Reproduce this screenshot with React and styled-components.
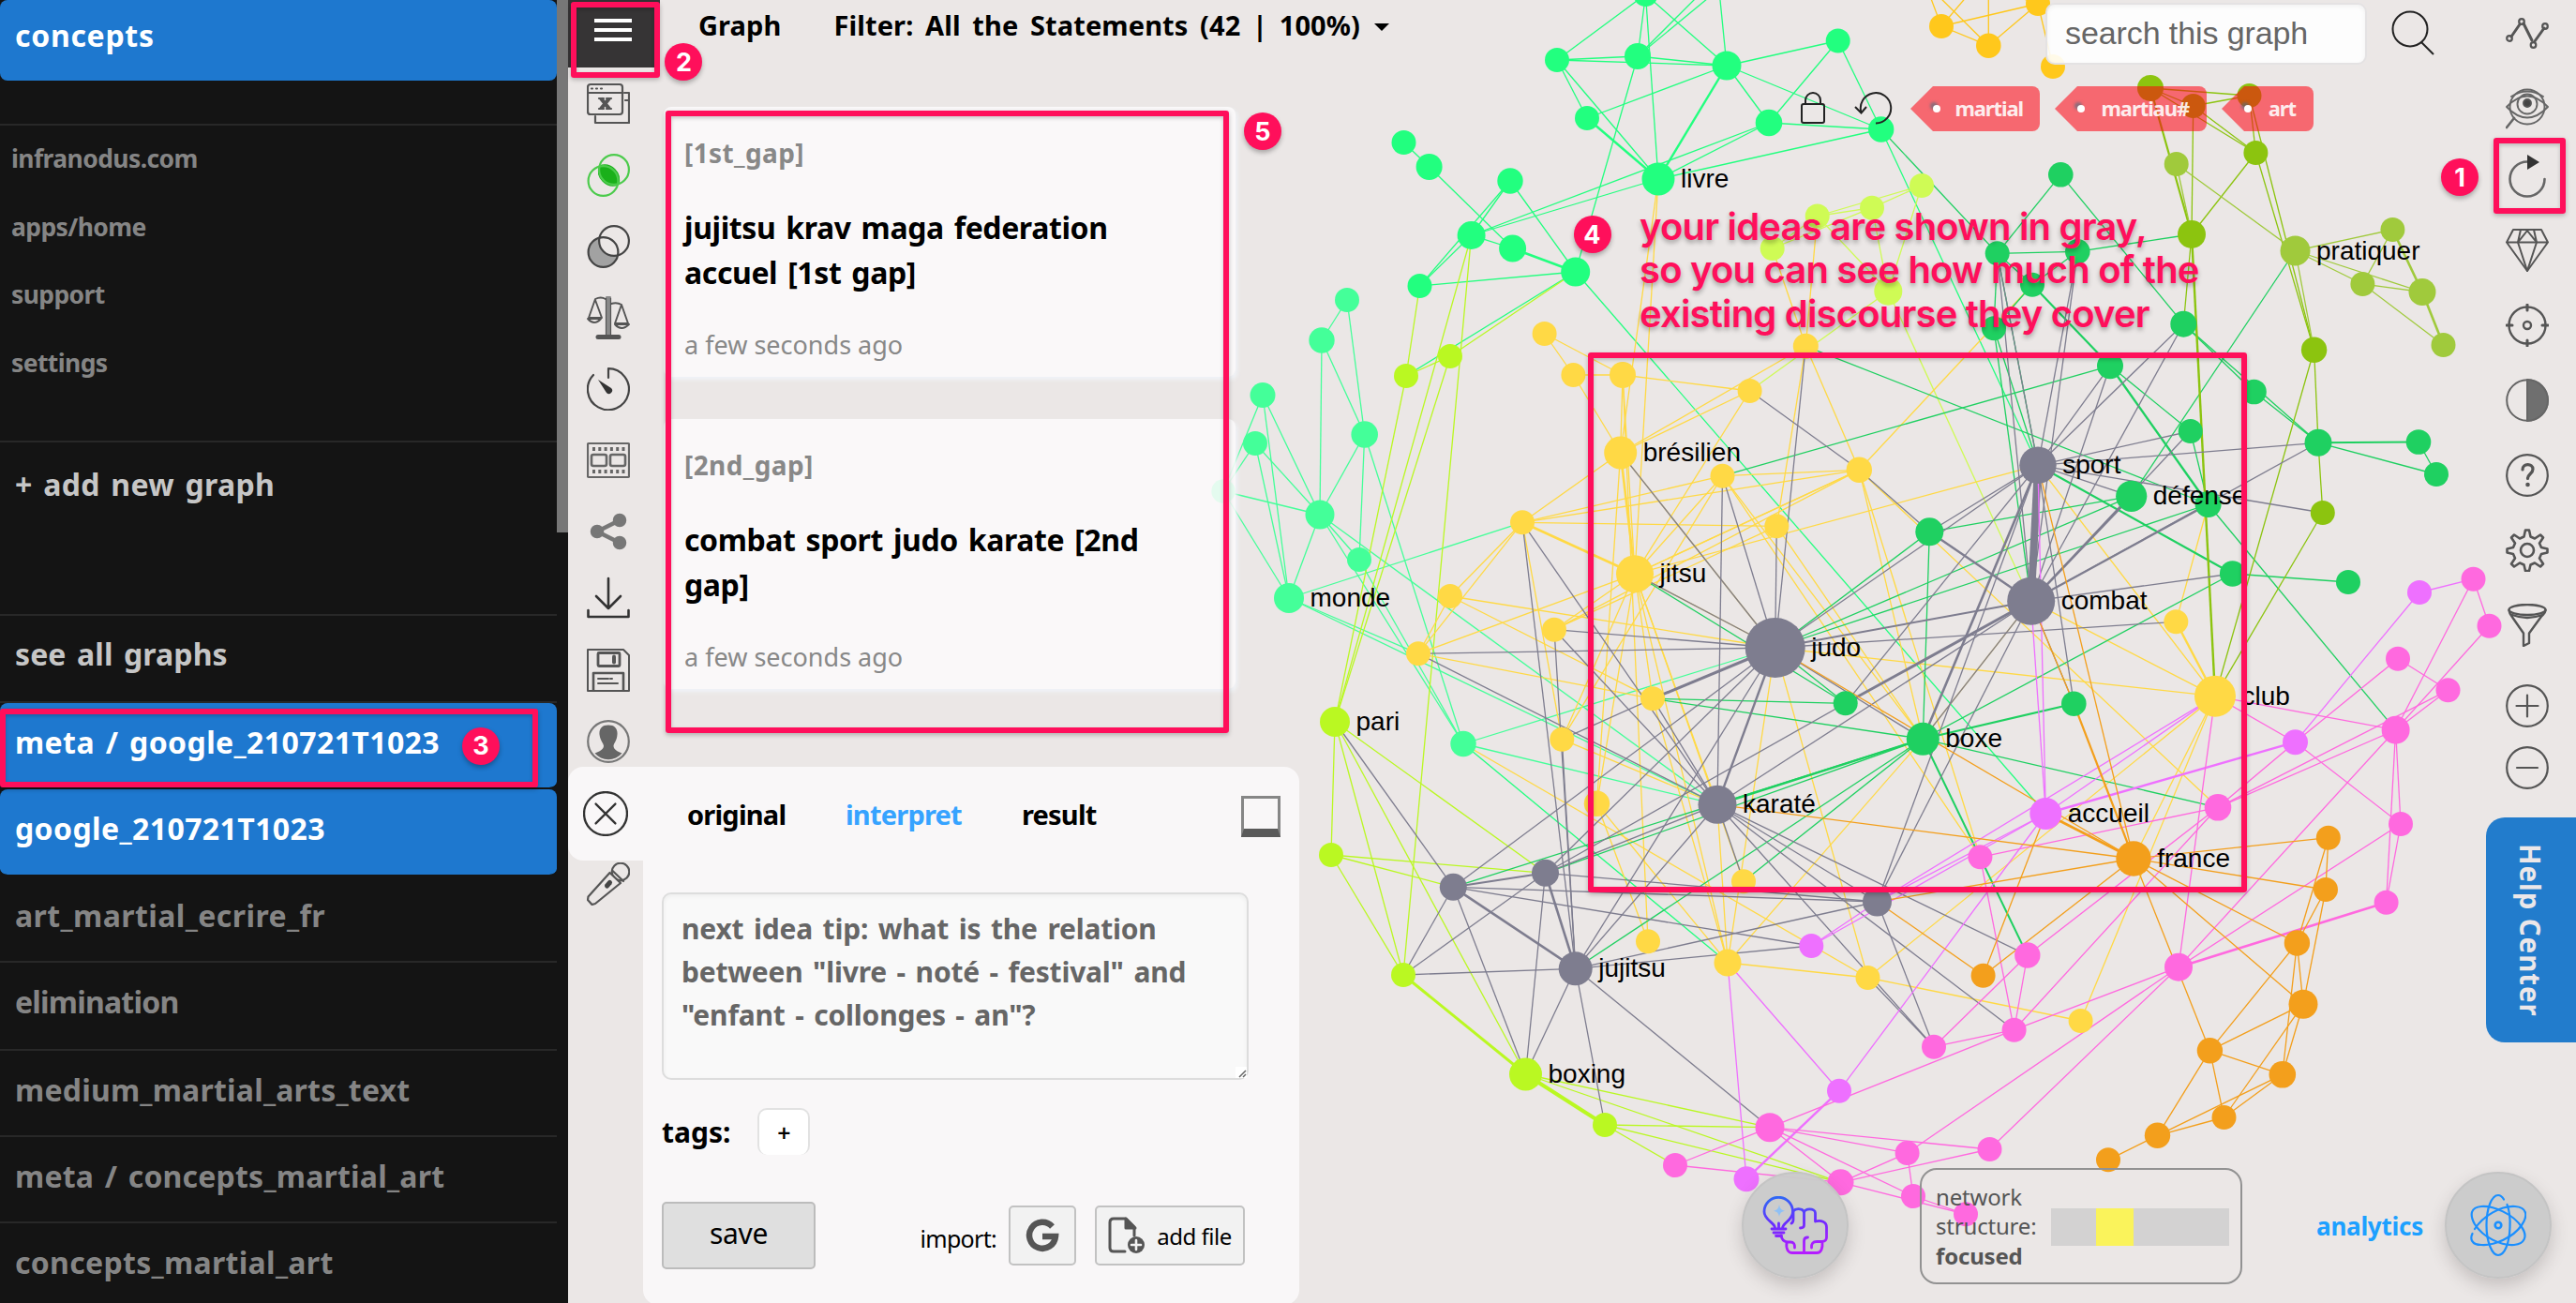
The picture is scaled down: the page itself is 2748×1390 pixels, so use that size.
import React from "react";
import styled, { createGlobalStyle, css } from "styled-components";

const UI = '"Noto Sans", "Open Sans", sans-serif';
const PINK = "#ff0f5b";

const GlobalStyle = createGlobalStyle`
  *, *::before, *::after { box-sizing: border-box; }
  html, body { margin: 0; padding: 0; background: #ebe7e6; overflow: hidden; }
  button { font: inherit; cursor: pointer; }
`;

/* ---------- graph data ---------- */

const C = {
  S: "#22ff7f", T: "#44ff99", L: "#baf822", M: "#cffb55", A: "#ffc81c", Y: "#ffd945",
  G: "#1fd061", O: "#8cc40f", Q: "#a0ca3c", K: "#7e7d8f", V: "#ee70ff", P: "#ff69df", N: "#f39f1c",
};

const groups = {
  S: "s1 1755.5 -6 13|s2 1661 64 13|s3 1747 60 14|s4 1842 70 15.5|s5 1960.7 43.5 13|s6 1693 126 13|s7 1887 131 14.3|s8 2006.7 138 13.7|livre 1769 191 17.5|s9 1497.5 152 13|s10 1524.6 178 14|s11 1611 193 13.7|s12 1569.6 251 15|s13 1613.6 265 14.5|s14 1680.7 290 15.5|s15 1514.5 305 13",
  T: "t1 1437 320 13|t2 1410 363 13.7|t3 1455.7 463.5 14.3|t4 1347 421.5 13.5|t5 1339 473 13|t6 1408 549 15.5|t7 1450 597 13|monde 1375 638 16|t8 1561 793.5 13.7|t9 1305 524 12.7",
  L: "l1 1500 401 13|l2 1547 380 13|pari 1424 770 16|l3 1420 912 13|l4 1497 1040 13|boxing 1627.5 1146 17.5|l5 1712 1200 13",
  M: "m1 1938.7 230.5 13|m2 1997 221.7 13|m3 2050 198 13|m4 1890.7 265 13|m5 2014.3 310.7 15",
  A: "a1 2071 28 13|a2 2121.3 48.7 13.3|a3 2174 4 13|a4 2190 71 13",
  Y: "y1 1647.6 356 13|y2 1678.4 400 13|y3 1731 400 14|y4 1866.6 417 13|y5 1926.3 369.3 13.5|brésilien 1728.7 483 17.5|y6 1837.5 507.7 13|y7 1983.3 501.3 13.7|y8 1895.3 561.3 13|y9 1624 557.3 13|jitsu 1744 612.3 20|y10 1547 636 13|y11 1658 671.7 13|y12 1513 697.3 13|y13 1763 745.3 13|y14 1666.3 788.7 13|y15 1703.5 857.3 13.7|y16 1860 940.3 13|y17 1758 1004.3 13|y18 1843 1027 14.5|y19 1992.5 1043 13|y20 2219.6 1089 13|y21 2321.3 663.3 13|club 2363 742.7 22",
  G: "g1 2198.3 186.3 13.3|g2 2130.7 270.3 13|g3 2216.3 268.3 13.3|g4 2168 303.7 13|g5 2127 350.3 13|g6 2329.3 345.7 14|g7 2251 390.3 14|g8 2404.5 418 13.3|g9 2336.7 460 13|g10 2473 472.3 14.5|g11 2580 471.5 13.3|g12 2599 506 13|défense 2273.7 529.3 16.6|g13 2355.6 538 14|g14 2058.3 567.3 15|g15 2381.6 612 13.7|g16 2505 621 13|g17 1968.7 750.3 13|g18 2212.3 750.7 13.3|boxe 2051.3 788.3 17.5",
  O: "o1 2294 94 14|o2 2339.7 113 13|o3 2399.5 102 13|o4 2406.4 163 13|o5 2338 250 15|o6 2468.6 373.3 13.7|o7 2477.8 547 13",
  Q: "q1 2321.7 175 13|pratiquer 2448.5 267.5 16|q2 2552.4 245 13|q3 2520.4 303 13|q4 2584 311.5 14.5|q5 2606.5 368 13",
  K: "sport 2174 496.3 19.7|combat 2166.7 641.3 25.5|judo 1893.7 691 32|karaté 1832 858.3 20.5|k1 1550.3 946.3 14.5|k2 1648.5 931.3 14.5|jujitsu 1680.7 1033.3 18|k3 2002.5 962 15.5",
  V: "accueil 2182.3 868 17|v1 1932.3 1009 13|v2 1962 1163.7 13|v3 1863 1257.7 13.5|v4 2581 632 13|v5 2448.5 791.7 13.5",
  P: "p1 2638.5 617.7 13|p2 2655.5 667.7 13|p3 2558 702.7 13|p4 2611.5 736.3 13|p5 2555.6 778.7 15|p6 2561 879 13|p7 2545.6 962.7 13|p8 2366 861.3 14.3|p9 2112.4 914.3 13|p10 2162.8 1019 13.7|p11 2063 1116.7 13|p12 2148.6 1098.7 13|p13 2324 1031.7 15|p14 1888 1202.7 15.5|p15 1787 1243 13|p16 2034.6 1230 13|p17 1963.5 1261.3 14|p18 2041 1276 13|p19 2122.5 1226 13|p20 2097 1295.3 13",
  N: "france 2276 916 18.7|f1 2483.8 893.7 13|f2 2481 949 13|f3 2450.4 1006 13.7|f4 2457 1071.3 15.5|f5 2357.4 1120.7 13.7|f6 2434.8 1146.3 14.3|f7 2372.5 1192 13|f8 2301.5 1211.3 13.7|f9 2249 1237.3 13|f10 2115.6 1040.7 13",
};

const nodes = Object.entries(groups).flatMap(([group, list]) =>
  list.split("|").map((entry) => {
    const [id, x, y, r] = entry.split(" ");
    return { id, group, x: +x, y: +y, r: +r };
  })
);

/* points outside the viewport that some edges run to */
const outside = {
  w1: { x: 1837, y: -30 }, w2: { x: 1856, y: -30 }, w3: { x: 1833, y: -20 },
  w4: { x: 2121.3, y: -20 }, w5: { x: 2053, y: -20 }, w6: { x: 2105, y: -12 },
  w7: { x: 2060, y: -12 }, w8: { x: 2144, y: -6 },
};
const at = { ...outside, ...Object.fromEntries(nodes.map((n) => [n.id, n])) };

/* from-to, with an optional :width */
const links = {
  S: "s1-s2 s1-s3 s1-s4 s1-livre s2-s3 s2-s4 s3-s4 s2-s6 s2-livre s4-s6 s6-livre:2.4 s4-livre:2.4 s4-s5 s4-s7 s4-s8 s5-s7 s5-s8 s7-s8 s7-livre s7-s12 s8-livre livre-s12 s3-s14 s9-s10 s10-s13 s11-s12 s11-s15 s11-s14 s12-s13 s13-s14:2.6 s12-s15 s15-s14 s14-l1 s3-w1 s3-w2 s4-w3 s14-accueil s8-sport t8-y18",
  T: "t1-t2 t1-t3 t2-t3 t2-t6 t3-t6 t3-t7 t3-t8 t4-t6 t4-t9 t4-monde t5-t6 t5-monde t5-t9 t9-t6 t9-monde t6-monde t6-t7 t6-t8 t7-t8 t6-karaté monde-y9 monde-karaté monde-y12 t8-judo t8-karaté",
  L: "s12-pari s12-l4 s15-l1 l1-pari l2-pari l1-l2 s14-l2 pari-l3 pari-l4 pari-k2 pari-boxing l3-k2 l3-k1 l3-l4 l4-boxing:3 boxing-l5:4 boxing-p14 boxing-p17 l5-p14 l5-p17 l5-p15",
  M: "m1-m2 m1-m3 m2-m4 m1-m4 m2-m3 m1-m5 m2-m5 m3-m5 m5-y4 m5-combat",
  A: "a1-a2 a1-a3 a2-a3 a3-a4 a2-w4 a1-w5 a1-w6 a2-w7 a3-w8",
  Y: "y1-y2 y1-y3 y2-y3 y2-brésilien y3-brésilien y3-jitsu y3-y4 y4-brésilien y5-brésilien y4-jitsu y5-y8 y5-y7 m4-y5 m1-y5 livre-brésilien livre-jitsu brésilien-jitsu:2.6 brésilien-y9 brésilien-judo brésilien-y15 y9-y6 y9-y7 y9-y8 y9-jitsu:2.6 y9-y12 y9-y10 y9-y14 y10-y12 y10-judo y10-y13 y12-y13 y12-jitsu y11-jitsu y11-y7 y11-y8 y14-jitsu y14-karaté y14-y6 jitsu-judo jitsu-karaté jitsu-y6 jitsu-y7 jitsu-sport jitsu-y15 jitsu-y13 jitsu-y16 y15-y17 y15-y18 y17-y3 y6-y7 y6-boxe y8-boxe y7-boxe y7-jitsu y7-p8 y7-g4 y7-p9 sport-club combat-club judo-club y21-club:2.4 y21-g13 combat-boxe club-y19 club-france club-y20 boxe-y18 judo-y18 judo-y19 karaté-y18 y18-y19 y19-y20 t8-y19 y6-p9 y13-y18 jitsu-y18",
  G: "s8-g2 g1-g2 g1-g6 g2-g3 g2-g4 g3-g4 g4-g7:2.2 g2-g5 g4-g5 g3-o5 g6-g8 g6-g10 g8-g10 g7-g9 g7-g13:2.4 g9-g13 g10-g11:2 g10-g12 g11-g12 pratiquer-défense g13-p5 g15-g16 y5-g13 y6-g7 g14-défense judo-défense judo-g13 judo-g14 judo-g17 jitsu-g17 y13-g17 y13-boxe g14-boxe combat-g5 sport-g5 sport-g2 sport-g15:2.2 boxe-g15 boxe-g18:2.2 boxe-p8 boxe-p10:2 boxe-karaté:2.4 boxe-jujitsu boxe-k1 boxe-k2 boxe-y16",
  O: "o1-o2 o1-o3 o2-o3 o1-o4 o2-o4 o3-o4 o1-o5:2.2 o2-o5 o4-o5 o3-o6 o4-o6 o6-g10 o7-g10 o5-g6 o5-club:2.4 o7-club o6-club",
  Q: "q1-pratiquer q1-o5 pratiquer-q2 q2-q3 q2-q4:2.6 pratiquer-q3 pratiquer-q4 q3-q4 q4-q5:2.6 q3-q5 pratiquer-o6",
  K: "sport-combat:8 y4-y7 y7-g14 brésilien-judo y5-judo y6-judo y6-karaté y8-judo y9-jujitsu y9-karaté y12-judo y12-karaté y11-judo y11-karaté y11-jujitsu y14-y13 y14-jujitsu y13-judo:3 y13-karaté jitsu-judo y21-judo sport-g14 judo-sport judo-combat:2 g2-combat g2-sport g3-sport g3-combat g6-sport g7-sport g7-combat g6-combat combat-défense:2.6 g9-combat g9-sport g10-sport g10-combat o7-sport sport-défense combat-g13:2.2 combat-g15 sport-g18 combat-g18 combat-g17:3 combat-karaté combat-g14:2.4 sport-boxe:2.6 sport-g17 sport-k3 combat-k3 combat-boxe judo-k1 judo-k2 judo-jujitsu judo-karaté:2.4 judo-boxe judo-y13 g17-k2 karaté-jujitsu karaté-k2 karaté-k3 karaté-p10 karaté-p12 karaté-p11 karaté-y16 k1-k2:2 k1-k3 k1-v1 k1-jujitsu:2.6 k1-l4 k1-boxing k2-k3 k2-l4 k2-boxing k2-jujitsu:2.6 jujitsu-k3 jujitsu-v1 jujitsu-boxing jujitsu-l5 jujitsu-p14 pari-k1 l4-jujitsu k3-p11 y19-p11",
  V: "sport-accueil combat-accueil club-accueil club-k3 accueil-v1 k3-v1 accueil-v2 accueil-v5:2.4 accueil-k3 v5-v4 v4-p1 v2-v3:2.4 y18-v3 y18-v2",
  P: "club-p13 club-p5 club-v5 v5-p6 p8-p9 p8-p10 p8-p12 p8-v5 p8-p4 p8-p5 v5-p3 p1-p2 p1-p5 p2-p5 p3-p4 p4-p5 p5-p7 p5-p6 p6-p7 p5-p13 p6-p13 p7-p13:2.6 p13-p12 p13-p16 p13-p19 p12-p14 p9-p12 p10-p11 p10-p12 p11-p12 p14-p15 p14-p16 p14-p17 p14-p18 p14-p19 p15-p17 p16-p18 p17-p16 p17-p19 p17-p20 p18-p20",
  N: "judo-france karaté-france sport-france combat-g18 g18-france:2.2 accueil-france:2.6 accueil-f10 k3-france k3-f10 f10-france f1-france f2-france f3-france f4-france f5-france f1-f2 f1-f3 f2-f3 f2-f4 f3-f4 f3-f5 f3-f6 f4-f5 f4-f6 f4-f7 f5-f6 f5-f7 f5-f8 f6-f7 f6-f8 f7-f8 f8-f9",
};
const edges = Object.entries(links).flatMap(([group, list]) =>
  list.split(" ").map((e) => {
    const [pair, w] = e.split(":");
    const [a, b] = pair.split("-");
    return { group, a: at[a], b: at[b], w: w ? +w : 1.3, key: group + e };
  })
);

/* ---------- shell ---------- */

const Shell = styled.div`
  position: relative; display: flex; width: 2748px; height: 1390px; overflow: hidden;
  background: #ebe7e6; font-family: ${UI}; color: #000;
`;

const Sidebar = styled.aside`
  display: flex; width: 606px; flex: none; background: #141414; overflow: hidden;
`;
const SidebarList = styled.nav`width: 594px; display: flex; flex-direction: column;`;
const ScrollThumb = styled.div`width: 12px; height: 568px; background: #777;`;
const SideRow = styled.a`
  display: block; flex: none; height: ${(p) => p.$h}px; padding: ${(p) => p.$pt}px 17px 0 16px;
  font-size: 32px; line-height: 44px; font-weight: 700; white-space: nowrap;
  letter-spacing: ${(p) => p.$ls ?? 0.3}px; word-spacing: 3px;
  color: ${(p) => (p.$active ? "#fff" : p.$light ? "#c6c6c6" : "#858585")};
  border-bottom: ${(p) => (p.$plain ? "0" : "2px solid #282828")};
  ${(p) => p.$active && css`background: #1e78cf; border-bottom-color: #141414; border-radius: 8px; background-clip: padding-box;`}
`;
const SideLink = styled.a`
  display: block; height: 72.700px; padding-left: 12px; font-size: 26.500px; line-height: 40px;
  font-weight: 700; color: #858585; letter-spacing: -0.6px;
`;
const SideSection = styled.div`
  flex: none; height: 340px; padding-top: 15px; border-top: 2px solid #282828; border-bottom: 2px solid #282828;
`;
const SideGap = styled.div`flex: none; height: 46px;`;

const Workspace = styled.main`position: relative; display: flex; flex: 1; min-width: 0;`;
const GraphCanvas = styled.svg`position: absolute; left: -606px; top: 0; pointer-events: none;`;
const NodeLabel = styled.text`font-family: "Liberation Sans", Arial, sans-serif; font-size: 28px; fill: #000;`;

/* ---------- tool rail ---------- */

const Rail = styled.div`position: relative; width: 80px; flex: none; display: flex; flex-direction: column;`;
const MenuButton = styled.button`
  width: 98px; height: 72px; margin: 0 0 1px; padding: 20px 30px 0 28px; border: 0; background: #363435;
  display: flex; flex-direction: column; gap: 6px; flex: none;
`;
const MenuLine = styled.span`height: 4px; background: #fff;`;
const Tool = styled.div`
  height: ${(p) => p.$h ?? 76}px; margin-top: ${(p) => p.$mt ?? 0}px; width: 86px; flex: none;
  display: flex; align-items: center; justify-content: center;
`;
const CloseTab = styled.div`
  height: 100px; margin-top: -11px; background: #f9f7f8; border-radius: 16px 0 0 16px; flex: none;
  display: flex; align-items: center; justify-content: center;
`;

/* ---------- statements column ---------- */

const MainColumn = styled.section`position: relative; width: 700px; flex: none; display: flex; flex-direction: column;`;
const TopBar = styled.header`
  height: 114px; flex: none; display: flex; gap: 56px; padding: 5px 0 0 59px; white-space: nowrap;
  font-size: 29px; line-height: 44px; font-weight: 700; letter-spacing: 0.1px; word-spacing: 5px; overflow: visible;
`;
const FilterLabel = styled.span`display: flex; align-items: center; gap: 15px; height: 44px;`;
const Caret = styled.i`border: 8px solid transparent; border-top-color: #000; border-bottom: 0; margin-top: 3px;`;
const Statements = styled.div`display: flex; flex-direction: column; gap: 45px; margin-left: 22px;`;
const StatementCard = styled.article`
  width: 610px; height: 288px; padding: 27px 24px 0 22px; border-radius: 8px;
  background: rgba(252, 250, 251, .87); box-shadow: 2px 3px 5px rgba(240, 244, 250, .95);
`;
const StatementTag = styled.div`font-size: 28px; line-height: 44px; font-weight: 700; color: #888; letter-spacing: 0.4px;`;
const StatementText = styled.p`margin: 34px 0 31px; font-size: 32px; line-height: 48px; font-weight: 700; letter-spacing: -0.4px; word-spacing: 3px;`;
const StatementTime = styled.div`font-size: 27px; line-height: 44px; color: #888;`;

const Editor = styled.div`
  flex: none; height: 574px; margin-top: 83px; padding: 0 20px; background: #f9f7f8; border-radius: 0 16px 16px 16px;
  display: flex; flex-direction: column;
`;
const EditorHead = styled.div`display: flex; align-items: center; height: 101px; padding-left: 27px;`;
const EditorTab = styled.span`
  width: ${(p) => p.$w}px; font-size: 29px; font-weight: 700; letter-spacing: -0.8px;
  color: ${(p) => (p.$on ? "#36a3ff" : "#000")};
`;
const DockToggle = styled.span`width: 42px; height: 44px; margin: 4px 0 0 auto; border: 3px solid #868686; border-bottom: 9px solid #5a5a5a;`;
const TextBox = styled.div`
  position: relative; width: 626px; height: 200px; margin-top: 33px; padding: 14px 19px; border: 2px solid #ddd; border-radius: 10px;
  background: #f9f9f9; box-shadow: inset 0 2px 5px rgba(0,0,0,.05);
  font-size: 30px; line-height: 46px; font-weight: 700; letter-spacing: -0.2px; word-spacing: 3px; color: #666; white-space: nowrap;
`;
const Grip = styled.svg`position: absolute; right: 0; bottom: 0;`;
const TagRow = styled.div`display: flex; align-items: center; gap: 29px; margin-top: 30px; height: 50px; font-size: 30px; font-weight: 700; letter-spacing: 0;`;
const AddTag = styled.button`
  width: 56px; height: 50px; border: 2px solid #e2e2e2; border-bottom: 0; border-radius: 10px; background: #fff;
  font-size: 25px; font-weight: 600; padding: 0;
`;
const Actions = styled.div`display: flex; align-items: center; margin-top: 50px; height: 72px; padding-right: 38px;`;
const SaveButton = styled.button`
  width: 164px; height: 72px; padding: 0 0 5px; border: 2px solid #bcbcbc; border-radius: 5px; background: #dfdfdf; font-size: 30px; letter-spacing: -0.3px;
`;
const ImportLabel = styled.span`margin: 5px 13px 0 auto; font-size: 25px; letter-spacing: -0.7px;`;
const ImportButton = styled.button`
  display: flex; align-items: center; justify-content: center; gap: 12px; height: 64px; width: ${(p) => p.$w}px;
  margin-right: ${(p) => p.$mr ?? 0}px; padding: 0; border: 2px solid #c2c2c2; border-radius: 5px; background: #f2f2f2;
  font-size: 24px; letter-spacing: -0.5px;
`;

/* ---------- right area ---------- */

const Stage = styled.section`position: relative; flex: 1; display: flex; flex-direction: column;`;
const StageTop = styled.div`display: flex; height: 1246px;`;
const StageMain = styled.div`flex: 1; display: flex; flex-direction: column; align-items: flex-end;`;
const SearchRow = styled.div`display: flex; align-items: center; gap: 26px; height: 66px; margin: 3px 46px 23px 0;`;
const SearchInput = styled.div`
  width: 343px; height: 66px; padding: 0 19px 1px; display: flex; align-items: center; border: 2px solid #e4e2e3; border-radius: 10px;
  background: rgba(255,255,255,.9); box-shadow: inset 0 2px 5px rgba(0,0,0,.05);
  font-family: "Liberation Sans", Arial, sans-serif; font-size: 34px; color: #666; white-space: nowrap; letter-spacing: -0.1px;
`;
const TagsRow = styled.div`display: flex; align-items: center; height: 48px; margin-right: 176px; gap: 16px;`;
const LockIcon = styled.svg`margin-right: 14px;`;
const UndoIcon = styled.svg`margin-right: 3px;`;
const ConceptTag = styled.span`
  position: relative; width: ${(p) => p.$w}px; height: 48px; padding: 0 ${(p) => p.$pr}px 3px 0; display: flex; align-items: center; justify-content: flex-end;
  background: rgba(255, 0, 14, .55); border-radius: 0 8px 8px 0; clip-path: polygon(0 50%, 24px 0, 100% 0, 100% 100%, 24px 100%);
  font-size: 22px; font-weight: 700; color: rgba(255,255,255,.9); letter-spacing: -1.1px;
  &::before { content: ""; position: absolute; left: 24px; top: 20px; width: 8px; height: 8px; border-radius: 50%; background: #fff; box-shadow: -3px -3px 3px rgba(70,110,130,.6); }
`;
const IconColumn = styled.div`width: 104px; display: flex; flex-direction: column; align-items: center;`;
const IconSlot = styled.div`
  flex: none; height: ${(p) => p.$h ?? 80}px; margin-top: ${(p) => p.$mt ?? 0}px; margin-bottom: ${(p) => p.$mb ?? 0}px;
  display: flex; align-items: center;
`;
const HelpTab = styled.button`
  flex: none; align-self: flex-end; width: 96px; height: 240px; margin-top: 20px; padding: 0 2px 0 0; border: 0; border-radius: 20px 0 0 20px;
  background: #227ccc; color: #ebe7e9; writing-mode: vertical-rl; font-size: 29.500px; font-weight: 700; letter-spacing: 0.9px; text-align: center;
`;
const BottomRow = styled.footer`display: flex; align-items: center; justify-content: flex-end; height: 124px; padding-right: 26px;`;
const RoundButton = styled.button`
  width: 114px; height: 114px; border-radius: 50%; border: 2px solid #c4c4c4; background: rgba(202,202,202,.97); padding: 0;
  margin-right: ${(p) => p.$mr ?? 0}px; margin-top: -2px; box-shadow: 0 8px 18px rgba(70,60,60,.22); display: flex; align-items: center; justify-content: center;
`;
const StructureBox = styled.div`
  width: 344px; height: 124px; margin-right: 79px; padding: 0 12px 0 15px; border: 2px solid #929292; border-radius: 18px;
  display: flex; align-items: center; justify-content: space-between; color: #555; font-size: 24px; line-height: 31.500px; letter-spacing: -0.2px;
`;
const Meter = styled.span`width: 190px; height: 40px; margin-top: 2px; background: #d3d2d2; display: flex; padding-left: 48px;`;
const MeterMark = styled.span`width: 40px; background: #faf35b;`;
const AnalyticsLabel = styled.span`margin-right: 23px; font-size: 26px; font-weight: 700; letter-spacing: -0.25px; color: #1da0ff;`;

/* ---------- annotations laid over the interface ---------- */

const Frame = styled.div`
  position: absolute; left: ${(p) => p.$x}px; top: ${(p) => p.$y}px; width: ${(p) => p.$w}px; height: ${(p) => p.$h}px;
  border: 6px solid ${PINK}; border-radius: 3px; box-shadow: 0 2px 5px rgba(0,0,0,.25), inset 0 2px 4px rgba(0,0,0,.2); pointer-events: none;
`;
const Badge = styled.div`
  position: absolute; left: ${(p) => p.$x - 20}px; top: ${(p) => p.$y - 20}px; width: 40px; height: 40px; border-radius: 50%;
  display: flex; align-items: center; justify-content: center; background: ${PINK}; color: #fff; font: 700 27px Inter, sans-serif;
  box-shadow: 0 3px 5px rgba(0,0,0,.28);
`;
const Note = styled.p`
  position: absolute; left: 1749px; top: 219px; margin: 0; font: 600 40px/46.300px Inter, sans-serif; letter-spacing: -0.82px; color: ${PINK};
  text-shadow: 0 3px 5px rgba(0,0,0,.3); white-space: nowrap;
`;

/* ---------- icons ---------- */

const Icon = ({ children, color = "#555", sw = 2.2, w = 46, h = 46, vb = "0 0 46 46" }) => (
  <svg width={w} height={h} viewBox={vb} fill="none" stroke={color} strokeWidth={sw} strokeLinecap="round" strokeLinejoin="round">
    {children}
  </svg>
);

const WindowsIcon = () => (
  <Icon>
    <rect x="1" y="2" width="37" height="32" rx="3" /><path d="M1 11h37M40 11h5v32H9v-7M41 19h4" />
    <path d="M5 6.500h1M10 6.500h1M15 6.500h1" /><path d="M15 17l9 11M24 17l-9 11" strokeWidth="4" strokeLinecap="butt" /><path d="M13 17h5M21 17h5M13 28h5M21 28h5" />
  </Icon>
);
const OverlapIcon = () => (
  <Icon color="#4ccb4c">
    <path d="M13 12.500A16.300 16.300 0 0 1 34 33.500A16.300 16.300 0 0 1 13 12.500" fill="#1ab01a" stroke="none" />
    <circle cx="29" cy="17" r="15.900" /><circle cx="17.500" cy="29" r="15.900" />
  </Icon>
);
const DifferenceIcon = () => (
  <Icon color="#444">
    <path d="M13 14A16 16 0 1 0 33.500 32.500A16 16 0 0 1 13 14" fill="#a2a2a2" stroke="none" />
    <circle cx="29" cy="17" r="15.900" /><circle cx="17.500" cy="29" r="15.900" />
  </Icon>
);
const ScalesIcon = () => (
  <Icon sw={1.9}>
    <path d="M23 1v41" strokeWidth="5.500" stroke="#8a8a8a" /><path d="M20.500 2v40M25.500 2v40" strokeWidth="1.200" />
    <path d="M12 43.500h22" strokeWidth="5" /><path d="M20 3q-5-3-11 0l-7 20h14L9 4M26 8q6-2 11 1l-7 20h14L37 9" />
    <path d="M1 24q7 8 14 0zM30 30q7 8 15 0z" />
  </Icon>
);
const TimerIcon = () => (
  <Icon color="#444">
    <path d="M23 11V1.200A22 22 0 1 1 7 8" /><path d="M12 13l14 9a3.300 3.300 0 0 1-5 5z" fill="#333" stroke="none" />
  </Icon>
);
const FilmIcon = () => (
  <Icon color="#666">
    <rect x="1" y="5" width="44" height="36" rx="1" /><path d="M6 11h35M6 35h35" strokeWidth="4" strokeDasharray="3 3.300" strokeLinecap="butt" />
    <rect x="5" y="17" width="16" height="12" rx="2" strokeWidth="2.600" /><rect x="25" y="17" width="16" height="12" rx="2" strokeWidth="2.600" />
  </Icon>
);
const ShareIcon = () => (
  <Icon color="#777" sw={4.500}>
    <path d="M35 11L11 23l24 12" /><circle cx="35" cy="11" r="5" fill="#777" /><circle cx="11" cy="23" r="5" fill="#777" /><circle cx="35" cy="35" r="5" fill="#777" />
  </Icon>
);
const DownloadIcon = () => (
  <Icon color="#333" sw={2.600}><path d="M23 2v32M10 21l13 13 13-13M1.500 36v7h43v-7" /></Icon>
);
const FloppyIcon = () => (
  <Icon sw={2}>
    <path d="M1 1h38l6 6v38H1z" /><rect x="12" y="4.500" width="23" height="14" rx="1" strokeWidth="2.800" /><path d="M29 8.500v6" strokeWidth="4" />
    <path d="M7 45V26h32v19" strokeWidth="2.600" /><path d="M12 32h11M25 32h2M12 37h21" />
  </Icon>
);
const UserIcon = () => (
  <Icon color="#777">
    <circle cx="23" cy="23" r="21.800" /><path d="M23 5.500c7 0 10 4 9.500 10-.5 7-3.500 9-4 12 0 4 4 6 9 8A19 19 0 0 1 8.500 35.500c5-2 9.500-4 9.500-8-.5-3-3.500-5-4.500-12-.5-6 2.500-10 9.500-10z" fill="#666" stroke="none" />
  </Icon>
);
const CloseIcon = () => (
  <Icon color="#333" w={48} h={48}><circle cx="23" cy="23" r="22" /><path d="M13 13l20 20M33 13L13 33" /></Icon>
);
const MicIcon = () => (
  <Icon>
    <circle cx="36" cy="10" r="9.300" /><path d="M24.500 11L36 22 9 44l-3.500 1-4.500-5 .5-3.500z" fill="#ebe7e6" /><path d="M27 8.500L39 20" /><path d="M21.500 25l3-3.500" strokeWidth="5" stroke="#444" />
  </Icon>
);

const TrendIcon = () => (
  <Icon h={40} vb="0 0 46 40"><path d="M6 23L15 10M19 9l9 18M31 28L41 14" strokeWidth="3" /><circle cx="4" cy="25" r="2.800" /><circle cx="17" cy="7" r="2.800" /><circle cx="29.500" cy="32" r="2.800" /><circle cx="42" cy="12" r="2.800" /></Icon>
);
const EyeIcon = () => (
  <Icon sw={1.900} color="#666">
    <circle cx="23" cy="22" r="18.500" /><path d="M9 34L1 44" strokeWidth="2.600" /><path d="M1 22q22-23 44 0Q23 45 1 22z" />
    <circle cx="23" cy="19" r="10.500" /><circle cx="23" cy="18" r="4" fill="#444" stroke="#555" /><path d="M6 11q17-11 34 0" />
  </Icon>
);
const ReloadIcon = () => (
  <Icon color="#666" sw={2.600}><path d="M23 7.500A18.500 18.500 0 1 0 41.500 26" /><path d="M23 0v16l13-8z" fill="#333" stroke="none" /></Icon>
);
const GemIcon = () => (
  <Icon sw={2}><path d="M8 1h30l7 13.500L23 45 1 14.500zM1 14.500h44" /><path d="M16 1l-3 13.500L23 45l10-30.500L30 1M13 14.500L23 2l10 12.500" /></Icon>
);
const TargetIcon = () => (
  <Icon sw={2.400}><circle cx="23" cy="23" r="19.500" /><circle cx="23" cy="23" r="4" /><path d="M23 1v6M23 39v6M1 23h6M39 23h6" strokeWidth="3" /></Icon>
);
const ContrastIcon = () => (
  <Icon color="#666" sw={2}><circle cx="23" cy="23" r="21.800" /><path d="M23 1a22 22 0 0 1 0 44z" fill="#6f6f6f" /></Icon>
);
const HelpIcon = () => (
  <Icon><circle cx="23" cy="23" r="21.800" /><path d="M18 17c0-7 11-7 11-.5 0 5-5.500 5-5.500 10" strokeWidth="3.200" /><circle cx="23.500" cy="33" r="1.200" fill="#555" /></Icon>
);
const GearIcon = () => (
  <Icon sw={2.600}>
    <path d="M21 1.500h4l1.500 7 4.500 2 6-4 3 3-4 6 2 4.500 6.500 1.500v4l-6.500 1.500-2 4.500 4 6-3 3-6-4-4.500 2-1.500 6.500h-4l-1.500-6.500-4.500-2-6 4-3-3 4-6-2-4.500-6.500-1.500v-4l6.500-1.500 2-4.500-4-6 3-3 6 4 4.500-2z" />
    <circle cx="23" cy="23" r="7" />
  </Icon>
);
const FunnelIcon = () => (
  <Icon sw={2.400}><ellipse cx="23" cy="6.500" rx="19.500" ry="5.500" /><path d="M3.500 7c.5 4 1.500 5 4 8l11.500 16.500V45l6-3V31.500L37 15c3-4 5-4 5.500-8M7 12q16 6 32 0" /></Icon>
);
const ZoomInIcon = () => (<Icon><circle cx="23" cy="23" r="21.800" /><path d="M23 11.500v23M11.500 23h23" /></Icon>);
const ZoomOutIcon = () => (<Icon><circle cx="23" cy="23" r="21.800" /><path d="M12 23h22" /></Icon>);

const BrainIcon = () => (
  <svg width="70" height="62" viewBox="-1 -1 70 62" fill="none" strokeWidth="2.800" strokeLinecap="round" strokeLinejoin="round" stroke="url(#brain)">
    <defs>
      <linearGradient id="brain" gradientUnits="userSpaceOnUse" x1="0" y1="0" x2="8" y2="61"><stop offset="0" stopColor="#2c6cf5" /><stop offset=".5" stopColor="#6a2cff" /><stop offset="1" stopColor="#b41cff" /></linearGradient>
    </defs>
    <path d="M12.500 33c0-6-11.500-8-11.500-17.500a15 15 0 0 1 30.500 0c0 9.500-10.500 11.500-11 17.500M16.500 33v-5M9 34h15M11 38h11M13.500 41.500h6" />
    <path d="M17 8q.8 6 6 6.800-5.200.7-6 6-.8-5.300-6-6 5.200-.8 6-6.800z" fill="#8fc0f5" stroke="none" />
    <path d="M32 15c3-3.500 11.500-3 11.500 2v13q0 3-4 3M43.500 17c0-5.500 12-5.500 12 0v9M32 15v9q0 3-2 4M55.500 26c6-1.500 12 0 12 6v11q0 4-4.500 4.500c.5 7-1 12-6 12H31c-4.500 0-7-4-6-11.500-4-1-5.500-4-6-7" />
    <path d="M43.500 59V47q0-4 4-4M25 48h4q5 0 4.500 6M63 47.500h-6q-6 0-5.500 6.500" />
  </svg>
);
const AtomIcon = () => (
  <svg width="60" height="68" viewBox="0 0 60 68" fill="none" stroke="#1a8fff" strokeWidth="2.200" strokeLinecap="round">
    <path d="M39.500 12C42 19 43 28 42.500 36c-.5 18-6 30-12.500 30S17.500 52 17.500 34 23 2 30 2c2.500 0 4.500 2 6 4.500" />
    <path d="M5 38C14 24 33 13 48 14c13 1 14 10 7 20C46 47 26 56 12 55 1 55 0 48 2.500 43" />
    <path d="M12 14c13-1 34 8 43 22 7 10 3 18-8 19-14 1-33-8-42-22C-1 22 1 15 12 14z" /><circle cx="30" cy="34" r="3.300" strokeWidth="2.600" />
  </svg>
);
const GoogleIcon = () => (
  <svg width="36" height="36" viewBox="0 0 36 36" fill="none" stroke="#555" strokeWidth="6.500"><path d="M28.500 8.500A14 14 0 1 0 32 19H18" /></svg>
);
const FileAddIcon = () => (
  <svg width="40" height="40" viewBox="0 0 40 40" fill="none" stroke="#555" strokeWidth="3" strokeLinecap="round" strokeLinejoin="round">
    <path d="M18 37H6q-4 0-4-4V6q0-4 4-4h13l9 9v9" /><path d="M19 2v10h10z" fill="#555" /><circle cx="30" cy="30" r="9" fill="#555" stroke="none" /><path d="M30 25v10M25 30h10" stroke="#f2f2f2" strokeWidth="2.600" />
  </svg>
);

/* ---------- sections ---------- */

const graphRows = [
  { name: "meta / google_210721T1023", active: true, h: 92, ls: 0.4 },
  { name: "google_210721T1023", active: true, h: 93, ls: 0.4 },
  { name: "art_martial_ecrire_fr", h: 92, ls: 0.4 },
  { name: "elimination", h: 94, ls: -0.8 },
  { name: "medium_martial_arts_text", h: 92, ls: 0.2 },
  { name: "meta / concepts_martial_art", h: 92, ls: 0.2 },
  { name: "concepts_martial_art", h: 94, ls: 0.3 },
];

const AppSidebar = () => (
  <Sidebar>
    <SidebarList>
      <SideRow $h={86} $pt={16} $ls={0.7} $active $plain>concepts</SideRow>
      <SideGap />
      <SideSection>
        {["infranodus.com", "apps/home", "support", "settings"].map((t) => <SideLink key={t}>{t}</SideLink>)}
      </SideSection>
      <SideRow $h={185} $pt={23} $light>+ add new graph</SideRow>
      <SideRow $h={93} $pt={19} $light $ls={0.1}>see all graphs</SideRow>
      {graphRows.map((g) => <SideRow key={g.name} $h={g.h} $pt={20} $ls={g.ls} $active={g.active}>{g.name}</SideRow>)}
    </SidebarList>
    <ScrollThumb />
  </Sidebar>
);

const NetworkGraph = () => (
  <GraphCanvas width="2748" height="1390">
    {edges.map((e) => <line key={e.key} x1={e.a.x} y1={e.a.y} x2={e.b.x} y2={e.b.y} stroke={C[e.group]} strokeWidth={e.w} />)}
    {nodes.map((n) => <circle key={n.id} cx={n.x} cy={n.y} r={n.r} fill={C[n.group]} />)}
    {nodes.filter((n) => n.id.length > 3).map((n) => (
      <NodeLabel key={n.id} x={n.x + n.r + 6.500} y={n.y + 9}>{n.id}</NodeLabel>
    ))}
  </GraphCanvas>
);

const ToolRail = () => (
  <Rail>
    <MenuButton><MenuLine /><MenuLine /><MenuLine /></MenuButton>
    <Tool><WindowsIcon /></Tool>
    <Tool><OverlapIcon /></Tool>
    <Tool><DifferenceIcon /></Tool>
    <Tool><ScalesIcon /></Tool>
    <Tool><TimerIcon /></Tool>
    <Tool><FilmIcon /></Tool>
    <Tool><ShareIcon /></Tool>
    <Tool $h={78} $mt={-6}><DownloadIcon /></Tool>
    <Tool><FloppyIcon /></Tool>
    <Tool><UserIcon /></Tool>
    <CloseTab><CloseIcon /></CloseTab>
    <Tool $h={50}><MicIcon /></Tool>
  </Rail>
);

const Statement = ({ tag, children }) => (
  <StatementCard>
    <StatementTag>{tag}</StatementTag>
    <StatementText>{children}</StatementText>
    <StatementTime>a few seconds ago</StatementTime>
  </StatementCard>
);

const EditorPanel = () => (
  <Editor>
    <EditorHead>
      <EditorTab $w={169}>original</EditorTab>
      <EditorTab $w={188} $on>interpret</EditorTab>
      <EditorTab $w={100}>result</EditorTab>
      <DockToggle />
    </EditorHead>
    <TextBox>
      next idea tip: what is the relation<br />between "livre - noté - festival" and<br />"enfant - collonges - an"?
      <Grip width="12" height="12"><path d="M0 0h12v12H0z" fill="#fff" /><path d="M4 11l7-7M8 11l3-3" stroke="#666" strokeWidth="1.500" /></Grip>
    </TextBox>
    <TagRow>tags: <AddTag>+</AddTag></TagRow>
    <Actions>
      <SaveButton>save</SaveButton>
      <ImportLabel>import:</ImportLabel>
      <ImportButton $w={72} $mr={20}><GoogleIcon /></ImportButton>
      <ImportButton $w={160}><FileAddIcon />add file</ImportButton>
    </Actions>
  </Editor>
);

export default function App() {
  return (
    <Shell>
      <GlobalStyle />
      <AppSidebar />
      <Workspace>
        <NetworkGraph />
        <ToolRail />
        <MainColumn>
          <TopBar>
            <span>Graph</span>
            <FilterLabel>Filter: All the Statements (42 | 100%)<Caret /></FilterLabel>
          </TopBar>
          <Statements>
            <Statement tag="[1st_gap]">jujitsu krav maga federation<br />accuel [1st gap]</Statement>
            <Statement tag="[2nd_gap]">combat sport judo karate [2nd<br />gap]</Statement>
          </Statements>
          <EditorPanel />
        </MainColumn>
        <Stage>
          <StageTop>
            <StageMain>
              <SearchRow>
                <SearchInput>search this graph</SearchInput>
                <svg width="47" height="50" fill="none" stroke="#222" strokeWidth="2"><circle cx="20" cy="20" r="18.500" /><path d="M32 34l13 13" /></svg>
              </SearchRow>
              <TagsRow>
                <LockIcon width="28" height="36" fill="none" stroke="#222" strokeWidth="2"><rect x="2" y="13" width="24" height="20" rx="2" /><path d="M6 13V9a8 8 0 0 1 16 0v4" /></LockIcon>
                <UndoIcon width="41" height="36" fill="none" stroke="#222" strokeWidth="2"><path d="M23 33.500A16.200 16.200 0 1 0 7.500 22" /><path d="M1 16l6.500 6.500L13 16" /></UndoIcon>
                <ConceptTag $w={138} $pr={18}>martial</ConceptTag>
                <ConceptTag $w={162} $pr={19}>martiau#</ConceptTag>
                <ConceptTag $w={98} $pr={19}>art</ConceptTag>
              </TagsRow>
            </StageMain>
            <IconColumn>
              <IconSlot $h={72} $mb={3}><TrendIcon /></IconSlot>
              <IconSlot><EyeIcon /></IconSlot>
              <IconSlot $h={66} $mb={6}><ReloadIcon /></IconSlot>
              <IconSlot><GemIcon /></IconSlot>
              <IconSlot><TargetIcon /></IconSlot>
              <IconSlot><ContrastIcon /></IconSlot>
              <IconSlot><HelpIcon /></IconSlot>
              <IconSlot><GearIcon /></IconSlot>
              <IconSlot><FunnelIcon /></IconSlot>
              <IconSlot $h={66} $mt={13}><ZoomInIcon /></IconSlot>
              <IconSlot $h={66}><ZoomOutIcon /></IconSlot>
              <HelpTab>Help Center</HelpTab>
            </IconColumn>
          </StageTop>
          <BottomRow>
            <RoundButton $mr={76}><BrainIcon /></RoundButton>
            <StructureBox>
              <span>network<br />structure:<br /><b>focused</b></span>
              <Meter><MeterMark /></Meter>
            </StructureBox>
            <AnalyticsLabel>analytics</AnalyticsLabel>
            <RoundButton><AtomIcon /></RoundButton>
          </BottomRow>
        </Stage>
      </Workspace>

      <Frame $x={2660} $y={147} $w={77} $h={81} />
      <Badge $x={2624} $y={189}>1</Badge>
      <Frame $x={609} $y={2} $w={95} $h={81} />
      <Badge $x={729.400} $y={66}>2</Badge>
      <Frame $x={0} $y={756} $w={574} $h={84} />
      <Badge $x={513} $y={795.500}>3</Badge>
      <Badge $x={1698.500} $y={250}>4</Badge>
      <Note>your ideas are shown in gray,<br />so you can see how much of the<br />existing discourse they cover</Note>
      <Frame $x={1693.500} $y={376} $w={703} $h={576} />
      <Frame $x={709.500} $y={118} $w={601} $h={664} />
      <Badge $x={1347} $y={140}>5</Badge>
    </Shell>
  );
}
